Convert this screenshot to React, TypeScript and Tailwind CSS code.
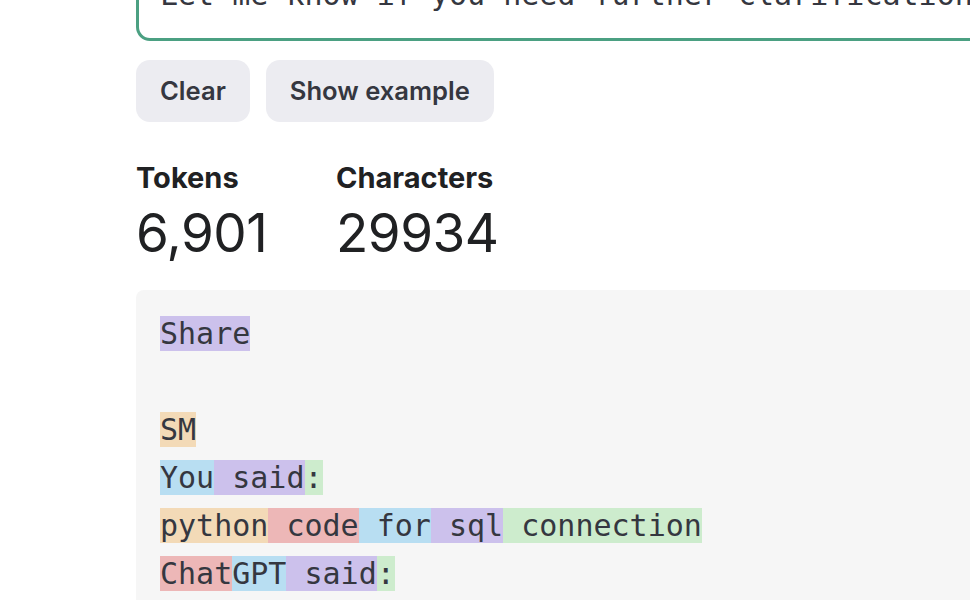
import React from 'react';

type Tok = { t: string; c: number };

const colors = [
  'bg-[#ccc1ec]',
  'bg-[#cdeccd]',
  'bg-[#f3dab7]',
  'bg-[#edb7b7]',
  'bg-[#b8def2]',
];

const lines: Tok[][] = [
  [{ t: 'Share', c: 0 }],
  [],
  [{ t: 'SM', c: 2 }],
  [{ t: 'You', c: 4 }, { t: ' said', c: 0 }, { t: ':', c: 1 }],
  [
    { t: 'python', c: 2 },
    { t: ' code', c: 3 },
    { t: ' for', c: 4 },
    { t: ' sql', c: 0 },
    { t: ' connection', c: 1 },
  ],
  [{ t: 'Chat', c: 3 }, { t: 'GPT', c: 4 }, { t: ' said', c: 0 }, { t: ':', c: 1 }],
];

const mono = "font-['DejaVu_Sans_Mono',monospace]";

const App: React.FC = () => {
  return (
    <div className="h-[600px] w-[970px] overflow-hidden bg-white pl-[136px] font-['Inter',sans-serif] text-[#202123]">
      {/* input box, scrolled mostly out of view */}
      <div className={`mt-[-32px] w-[1000px] rounded-[14px] border-[3px] border-[#4ba082] px-[21px] pb-[19px] ${mono} text-[30px] leading-[48px] whitespace-pre text-[#353740]`}>
        Let me know if you need further clarification
      </div>

      <div className="mt-[19px] flex gap-4">
        <button className="h-[62px] rounded-[14px] bg-[#ececf1] px-6 text-[25.6px] font-semibold text-[#353740]">
          Clear
        </button>
        <button className="h-[62px] rounded-[14px] bg-[#ececf1] px-6 text-[25.6px] font-semibold text-[#353740]">
          Show example
        </button>
      </div>

      <div className="mt-[38px] flex">
        <div className="w-[200px]">
          <div className="text-[29px] font-bold leading-[36px]">Tokens</div>
          <div className="text-[53px] leading-[74px] tracking-[-0.5px]">6,901</div>
        </div>
        <div>
          <div className="text-[29px] font-bold leading-[36px]">Characters</div>
          <div className="text-[53px] leading-[74px] tracking-[-0.5px]">29934</div>
        </div>
      </div>

      <div className={`mt-[20px] w-[1000px] rounded-[8px] bg-[#f6f6f6] px-6 pt-5 pb-6 ${mono} text-[30px] leading-[48px] whitespace-pre text-[#353740]`}>
        {lines.map((ln, i) => (
          <div key={i} className="h-[48px]">
            {ln.map((tk, j) => (
              <span key={j} className={colors[tk.c]}>
                {tk.t}
              </span>
            ))}
          </div>
        ))}
      </div>
    </div>
  );
};

export default App;
